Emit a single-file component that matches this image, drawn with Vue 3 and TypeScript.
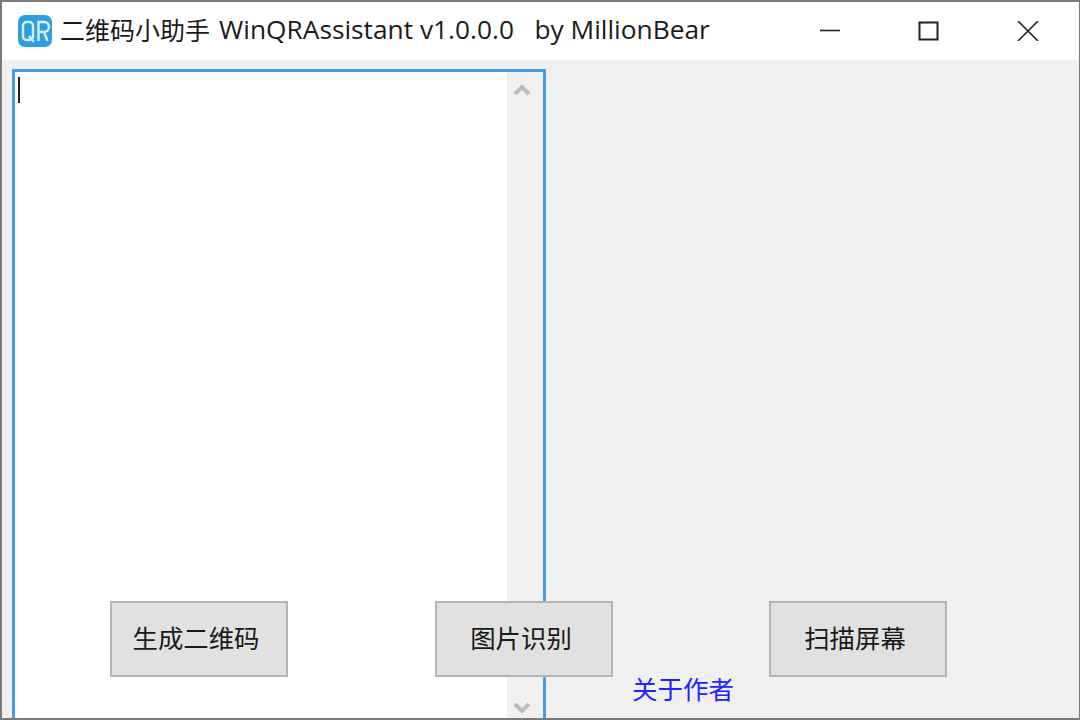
<template>
  <div class="window">
    <header class="titlebar">
      <svg class="app-icon" viewBox="0 0 34 32" width="34" height="32">
        <rect width="34" height="32" rx="7" fill="#2d9fe0" />
        <rect x="5" y="7" width="10" height="18" rx="3.5" fill="none" stroke="#d6eefb" stroke-width="2.4" />
        <path d="M11 21l5 6" stroke="#d6eefb" stroke-width="2.2" fill="none" />
        <path d="M20.5 26V7h5.500a4.500 4.500 0 0 1 0 10h-5.500M26 17l3.500 9" stroke="#d6eefb" stroke-width="2.4" fill="none" />
      </svg>
      <span class="title">二维码小助手</span>
      <span class="title-latin">WinQRAssistant v1.0.0.0&nbsp;&nbsp; by MillionBear</span>
      <div class="controls">
        <svg viewBox="0 0 22 20" width="22" height="20"><path d="M1 9.500h20" stroke="#222" stroke-width="1.600" /></svg>
        <svg viewBox="0 0 22 20" width="22" height="20"><rect x="1.500" y="1.500" width="18" height="17" fill="none" stroke="#222" stroke-width="2" /></svg>
        <svg viewBox="0 0 22 20" width="22" height="20"><path d="M1 0l20 20M21 0L1 20" stroke="#222" stroke-width="1.600" fill="none" /></svg>
      </div>
    </header>
    <main class="client">
      <div class="textbox">
        <div class="edit"><i class="caret"></i></div>
        <div class="scrollbar">
          <svg viewBox="0 0 18 12" width="18" height="12"><path d="M2 10l7-7 7 7" stroke="#bdbdbd" stroke-width="4" fill="none" /></svg>
          <svg viewBox="0 0 18 12" width="18" height="12"><path d="M2 2l7 7 7-7" stroke="#bdbdbd" stroke-width="4" fill="none" /></svg>
        </div>
      </div>
      <div class="actions">
        <button v-for="b in buttons" :key="b.label" class="btn" :class="b.cls">{{ b.label }}</button>
      </div>
      <a class="about">关于作者</a>
    </main>
  </div>
</template>

<script setup lang="ts">
interface ActionButton {
  label: string;
  cls: string;
}

const buttons: ActionButton[] = [
  { label: "生成二维码", cls: "gen" },
  { label: "图片识别", cls: "pic" },
  { label: "扫描屏幕", cls: "scan" },
];
</script>

<style>
html,
body {
  margin: 0;
  overflow: hidden;
}
</style>

<style scoped>
.window {
  width: 1080px;
  height: 720px;
  box-sizing: border-box;
  display: flex;
  flex-direction: column;
  border: solid #7a7a7a;
  border-width: 2px 1px 2px 2px;
  background: #f0f0f0;
  font-family: "Open Sans", "Noto Sans CJK SC", sans-serif;
  color: #1a1a1a;
  overflow: hidden;
}

.titlebar {
  height: 58px;
  flex: none;
  display: flex;
  align-items: center;
  background: #fff;
  padding-left: 16px;
}

.app-icon {
  flex: none;
  margin-right: 8px;
}

.title,
.title-latin {
  white-space: nowrap;
  position: relative;
  top: -2px;
}

.title {
  font-size: 25px;
  margin-right: 9px;
}

.title-latin {
  font-size: 26.3px;
}

.controls {
  margin-left: auto;
  display: flex;
  gap: 77px;
  padding-right: 40px;
}

.client {
  position: relative;
  flex: 1;
  padding: 9px 0 0 10px;
  min-height: 0;
}

.textbox {
  width: 534px;
  height: 100%;
  box-sizing: border-box;
  display: flex;
  border: solid #429ee6;
  border-width: 3px 3px 0;
  background: #fff;
}

.edit {
  flex: 1;
  padding: 5px 0 0 3px;
}

.caret {
  display: block;
  width: 2px;
  height: 26px;
  background: #222;
}

.scrollbar {
  width: 36px;
  background: #f0f0f0;
  display: flex;
  flex-direction: column;
  justify-content: space-between;
  align-items: center;
  padding: 12px 6px 4px 0;
  box-sizing: border-box;
}

.actions {
  position: absolute;
  left: 108px;
  top: 541px;
  display: flex;
}

.btn {
  height: 76px;
  width: 178px;
  box-sizing: border-box;
  border: 2px solid #b4b4b4;
  background: #e1e1e1;
  font: inherit;
  font-size: 25.4px;
  color: #1a1a1a;
  padding: 0 6px 5px 0;
}

.pic {
  margin-left: 147px;
}

.scan {
  margin-left: 156px;
}

.about {
  position: absolute;
  left: 630px;
  top: 613px;
  font-size: 25.5px;
  line-height: 32px;
  color: #2222ff;
}
</style>
